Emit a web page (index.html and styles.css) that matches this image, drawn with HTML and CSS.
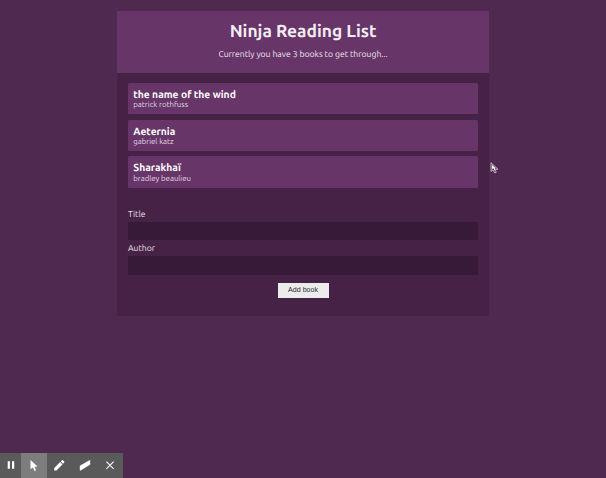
FILE: index.html
```html
<!DOCTYPE html>
<html lang="en">
<head>
<meta charset="utf-8">
<title>Ninja Reading List</title>
<link rel="stylesheet" href="styles.css">
</head>
<body>
<main class="app">
  <header class="navbar">
    <h1>Ninja Reading List</h1>
    <p>Currently you have 3 books to get through...</p>
  </header>
  <ul class="book-list">
    <li><div class="title">the name of the wind</div><div class="author">patrick rothfuss</div></li>
    <li><div class="title">Aeternia</div><div class="author">gabriel katz</div></li>
    <li><div class="title">Sharakhaï</div><div class="author">bradley beaulieu</div></li>
  </ul>
  <form>
    <label for="title">Title</label>
    <input id="title" type="text">
    <label for="author">Author</label>
    <input id="author" type="text">
    <button type="button">Add book</button>
  </form>
</main>
<svg class="cursor" viewBox="0 0 9 12"><path class="edge" d="M1 .7V9.5L3 7.8L4.7 11L6.2 10.3L5.2 7.3H8Z"/><path class="face" d="M2 3V7L3.4 6.2L5 9L4.8 6.3H5.8Z"/></svg>
<div class="toolbar">
  <span class="tool pause"><svg viewBox="0 0 26 26"><path d="M9.7 9.2h2.2v7.6h-2.2zM14 9.2h2.2v7.6h-2.2z"/></svg></span>
  <span class="tool active"><svg viewBox="0 0 26 26"><path d="M9.5 8v9.2l2.3-1.8 1.7 3.6 1.6-.8-1.6-3.5 3.1-.3z"/></svg></span>
  <span class="tool"><svg viewBox="0 0 26 26"><path d="M8.2 18.5v-2.4l6-6 2.3 2.3-6.1 6.1zM14.8 9.4l1.1-1.1q.5-.4 1 0l1.3 1.3q.5.5 0 1L17.1 11.7z"/></svg></span>
  <span class="tool"><svg viewBox="0 0 26 26"><path d="M7.8 13.8L17.4 8.2q.8-.3.8.4V12q0 .7-.6 1.1L8.7 18.5q-.9.4-.9-.5z"/></svg></span>
  <span class="tool"><svg viewBox="0 0 26 26"><path class="line" d="M9.4 9.6l7.2 7.2M16.6 9.6l-7.2 7.2"/></svg></span>
</div>
</body>
</html>
```
FILE: styles.css
```css
* { box-sizing: border-box; margin: 0; padding: 0; }
body {
  height: 478px;
  overflow: hidden;
  background: #4f2950;
  color: #f0e8f0;
  font-family: Ubuntu, "Noto Sans", sans-serif;
  text-rendering: geometricPrecision;
}
.app {
  width: 371.5px;
  height: 305.5px;
  margin: 10.5px 0 0 117.3px;
  background: #472247;
}
.navbar {
  height: 62px;
  padding-top: 9.2px;
  background: #673568;
  text-align: center;
}
h1 { font-size: 17.4px; line-height: 24px; color: #f4eef4; }
.navbar p { margin-top: 3.4px; font-size: 8.6px; line-height: 14px; }
.book-list { padding: 10.7px 10.7px 0; list-style: none; }
.book-list li {
  height: 31.3px;
  margin-bottom: 5.3px;
  padding: 4.9px 5.3px;
  border-radius: 1.5px;
  background: #673568;
}
.title { font-size: 10.3px; font-weight: 700; line-height: 12px; color: #fff; }
.author { margin-top: 1.4px; font-size: 7.75px; line-height: 9px; color: #e3d7e3; }
form { padding: 12.6px 10.7px 0; }
label { display: block; height: 16px; font-size: 8.6px; line-height: 16.4px; color: #eae0ea; }
input {
  display: block;
  width: 100%;
  height: 18.6px;
  border: 0;
  background: #371a37;
}
form button {
  display: block;
  width: 51px;
  height: 14.5px;
  margin: 8.3px auto 0;
  border: 0;
  background: #ececec;
  color: #2e2933;
  font: 7.1px/14.8px "Liberation Sans", sans-serif;
}
.cursor {
  position: absolute;
  left: 489.5px;
  top: 161.5px;
  width: 9px;
  height: 12px;
}
.edge { fill: #5b445b; stroke: #c4bac4; stroke-width: .9; }
.face { fill: #fff; }
.toolbar {
  position: fixed;
  left: 0;
  bottom: 0;
  display: flex;
  width: 123px;
  height: 25.5px;
  background: #5b5a5b;
}
.tool { display: flex; flex: 0 0 25.5px; min-width: 0; align-items: center; justify-content: center; }
.tool.pause { flex-basis: 21px; }
.tool.active { background: #7e7d7e; }
.tool svg { flex: none; width: 26px; height: 26px; fill: #fff; }
.tool .line { fill: none; stroke: #f2f2f2; stroke-width: 1.2; }
```
